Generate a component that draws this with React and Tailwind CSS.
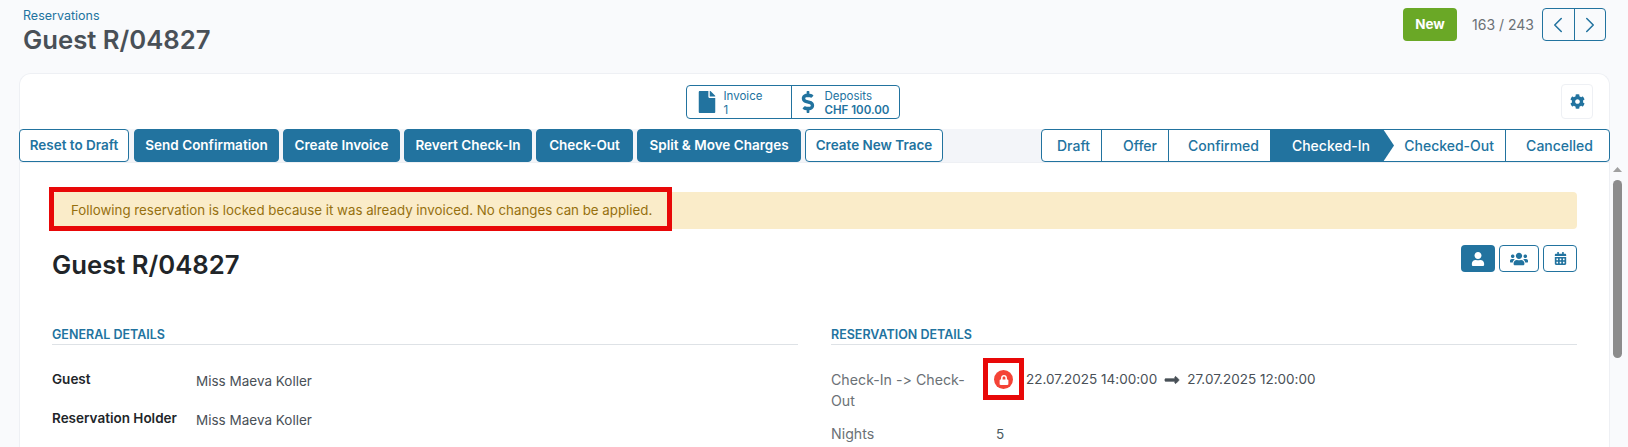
import React from "react";
import { FaFile, FaDollarSign, FaCog, FaUser, FaUsers, FaCalendarAlt, FaLock, FaLongArrowAltRight } from "react-icons/fa";
import { ChevronLeft, ChevronRight } from "lucide-react";

function ActionButton({ children, solid, className }) {
  return (
    <button className={`h-[33px] rounded-[4px] border border-[#22739f] text-[13.5px] font-semibold flex items-center justify-center ${solid ? "bg-[#22739f] text-white" : "bg-white text-[#22739f]"} ${className}`}>
      {children}
    </button>
  );
}

function Segment({ children, className }) {
  return (
    <div className={`h-full flex items-center justify-end text-[14px] font-medium text-[#22739f] ${className}`}>
      {children}
    </div>
  );
}

function Field({ label, value, className }) {
  return (
    <div className={`flex ${className}`}>
      <div className="w-[144px] text-[13.5px] leading-[20px] font-semibold text-[#212529]">{label}</div>
      <div className="text-[13.5px] leading-[20px] text-[#495057] pt-[2px]">{value}</div>
    </div>
  );
}

export default function App() {
  return (
    <div className="relative h-[447px] w-[1628px] overflow-hidden bg-[#f9fafc] font-['Inter','Liberation_Sans',sans-serif] [font-feature-settings:'calt'_0]">
      <header className="h-[73px] flex justify-between pl-[23px] pr-[22px]">
        <div className="pt-[9px]">
          <div className="text-[12.5px] leading-[14px] text-[#22739f]">Reservations</div>
          <div className="mt-[2px] text-[25.7px] leading-[30px] font-semibold text-[#495057]">Guest R/04827</div>
        </div>
        <div className="flex items-start pt-[8px]">
          <button className="h-[33px] w-[54px] rounded-[4px] bg-[#6aa826] text-white text-[13.5px] font-bold">New</button>
          <span className="ml-[15px] h-[33px] flex items-center text-[14px] text-[#6b7176]">163 / 243</span>
          <div className="ml-[8px] flex h-[33px] w-[64px] rounded-[4px] border border-[#22739f] text-[#22739f]">
            <div className="flex-1 flex items-center justify-center border-r border-[#22739f]"><ChevronLeft size={26} strokeWidth={1.4} /></div>
            <div className="flex-1 flex items-center justify-center"><ChevronRight size={26} strokeWidth={1.4} /></div>
          </div>
        </div>
      </header>

      <main className="ml-[19px] w-[1591px] h-[374px] rounded-t-[12px] bg-white border border-[#eef0f4] border-b-0">
        <div className="relative h-[55px] flex justify-center pt-[11px]">
          <div className="flex h-[34px] w-[214px] mr-[44px] rounded-[4px] border border-[#22739f] text-[#22739f]">
            <div className="w-[105px] flex items-center border-r border-[#22739f] pl-[9px] gap-[6px]">
              <FaFile size={22} />
              <div className="text-[11.5px] leading-[14px] pt-[1px]"><div>Invoice</div><div>1</div></div>
            </div>
            <div className="flex-1 flex items-center pl-[5px] gap-[6px]">
              <FaDollarSign size={22} />
              <div className="text-[11.5px] leading-[14px] pt-[1px]"><div>Deposits</div><div className="font-semibold">CHF 100.00</div></div>
            </div>
          </div>
          <button className="absolute right-[16px] top-[10px] h-[35px] w-[32px] rounded-[4px] border border-[#eef0f4] flex items-center justify-center text-[#22739f]">
            <FaCog size={15} />
          </button>
        </div>

        <div className="h-[34px] -ml-px -mr-px flex justify-between bg-[#f3f5f9] border-b border-[#eef0f4]">
          <div className="flex gap-[4px]">
            <ActionButton className="w-[110px] mr-[1px]">Reset to Draft</ActionButton>
            <ActionButton solid className="w-[145px]">Send Confirmation</ActionButton>
            <ActionButton solid className="w-[117px]">Create Invoice</ActionButton>
            <ActionButton solid className="w-[128px]">Revert Check-In</ActionButton>
            <ActionButton solid className="w-[97px]">Check-Out</ActionButton>
            <ActionButton solid className="w-[164px]">Split &amp; Move Charges</ActionButton>
            <ActionButton className="w-[138px]">Create New Trace</ActionButton>
          </div>
          <div className="flex h-[33px] w-[569px] rounded-[4px] border border-[#22739f] bg-white">
            <Segment className="w-[60px] pr-[11px] border-r border-[#22739f]">Draft</Segment>
            <Segment className="w-[67px] pr-[11px] border-r border-[#22739f]">Offer</Segment>
            <Segment className="w-[101px] pr-[11px]">Confirmed</Segment>
            <div className="relative w-[113px] h-[33px] -mt-px bg-[#22739f] text-white text-[14px] font-medium flex items-center justify-end pr-[13px]">
              Checked-In
              <svg className="absolute left-full top-0" width="11" height="33" viewBox="0 0 11 33"><polygon points="0,0 11,16.5 0,33" fill="#22739f" /></svg>
            </div>
            <Segment className="w-[123px] pr-[11px] border-r border-[#22739f]">Checked-Out</Segment>
            <Segment className="flex-1 pr-[16px]">Cancelled</Segment>
          </div>
        </div>

        <div className="pl-[32px] pr-[32px] pt-[29px]">
          <div className="ml-[1px] h-[37px] rounded-[4px] bg-[#faecc9] text-[#96700f] text-[13.3px] flex items-center pl-[18px] pt-[1px]">
            <span className="relative">Following reservation is locked because it was already invoiced. No changes can be applied.
              <span className="absolute left-[-22px] right-[-20px] top-[-14px] bottom-[-10px] border-[5px] border-[#e80808]" />
            </span>
          </div>

          <div className="h-[64px] flex justify-between items-start pt-[17px]">
            <h1 className="text-[25.7px] leading-[38px] font-semibold text-[#212529]">Guest R/04827</h1>
            <div className="flex gap-[4px] -mt-[1px]">
              <button className="h-[27px] w-[34px] rounded-[4px] bg-[#22739f] text-white flex items-center justify-center"><FaUser size={14} /></button>
              <button className="h-[27px] w-[40px] rounded-[4px] border border-[#22739f] text-[#22739f] flex items-center justify-center"><FaUsers size={18} /></button>
              <button className="h-[27px] w-[34px] rounded-[4px] border border-[#22739f] text-[#22739f] flex items-center justify-center"><FaCalendarAlt size={13} /></button>
            </div>
          </div>

          <div className="grid grid-cols-[746px_746px] gap-x-[33px] pt-[29px]">
            <section>
              <h2 className="h-[23px] pt-[3px] border-b border-[#dee2e6] text-[12.5px] leading-[19px] font-semibold text-[#22739f]">GENERAL DETAILS</h2>
              <Field label="Guest" value="Miss Maeva Koller" className="mt-[24px]" />
              <Field label="Reservation Holder" value="Miss Maeva Koller" className="mt-[17px]" />
            </section>
            <section>
              <h2 className="h-[23px] pt-[3px] border-b border-[#dee2e6] text-[12.5px] leading-[19px] font-semibold text-[#22739f]">RESERVATION DETAILS</h2>
              <div className="flex mt-[24px]">
                <div className="w-[152px] pr-[7px] text-[14.2px] leading-[21px] text-[#6b7176]">Check-In -&gt; Check-Out</div>
                <div className="relative flex items-start text-[13.5px] leading-[20px] text-[#495057]">
                  <span className="relative mt-[1px] ml-[11px] mr-[13px] h-[19px] w-[19px] rounded-full bg-[#f44336] text-white flex items-center justify-center">
                    <FaLock size={10} />
                    <span className="absolute left-[-11px] top-[-12px] h-[42px] w-[41px] border-[5px] border-[#e80808]" />
                  </span>
                  22.07.2025 14:00:00
                  <FaLongArrowAltRight size={16} stroke="currentColor" strokeWidth={24} className="mx-[7px] mt-[3px]" />
                  27.07.2025 12:00:00
                </div>
              </div>
              <div className="flex mt-[13px]">
                <div className="w-[165px] text-[14.2px] leading-[20px] text-[#6b7176]">Nights</div>
                <div className="text-[13.5px] leading-[20px] text-[#4a5a60]">5</div>
              </div>
            </section>
          </div>
        </div>
      </main>

      <div className="absolute left-[1613px] top-[166px] w-[9px] h-[281px]">
        <svg width="9" height="7" viewBox="0 0 9 7" className="mb-[7px]"><polygon points="4.5,1 9,6 0,6" fill="#a0a0a0" /></svg>
        <div className="h-[178px] w-[9px] rounded-full bg-[#8c8c8c]" />
      </div>
    </div>
  );
}
